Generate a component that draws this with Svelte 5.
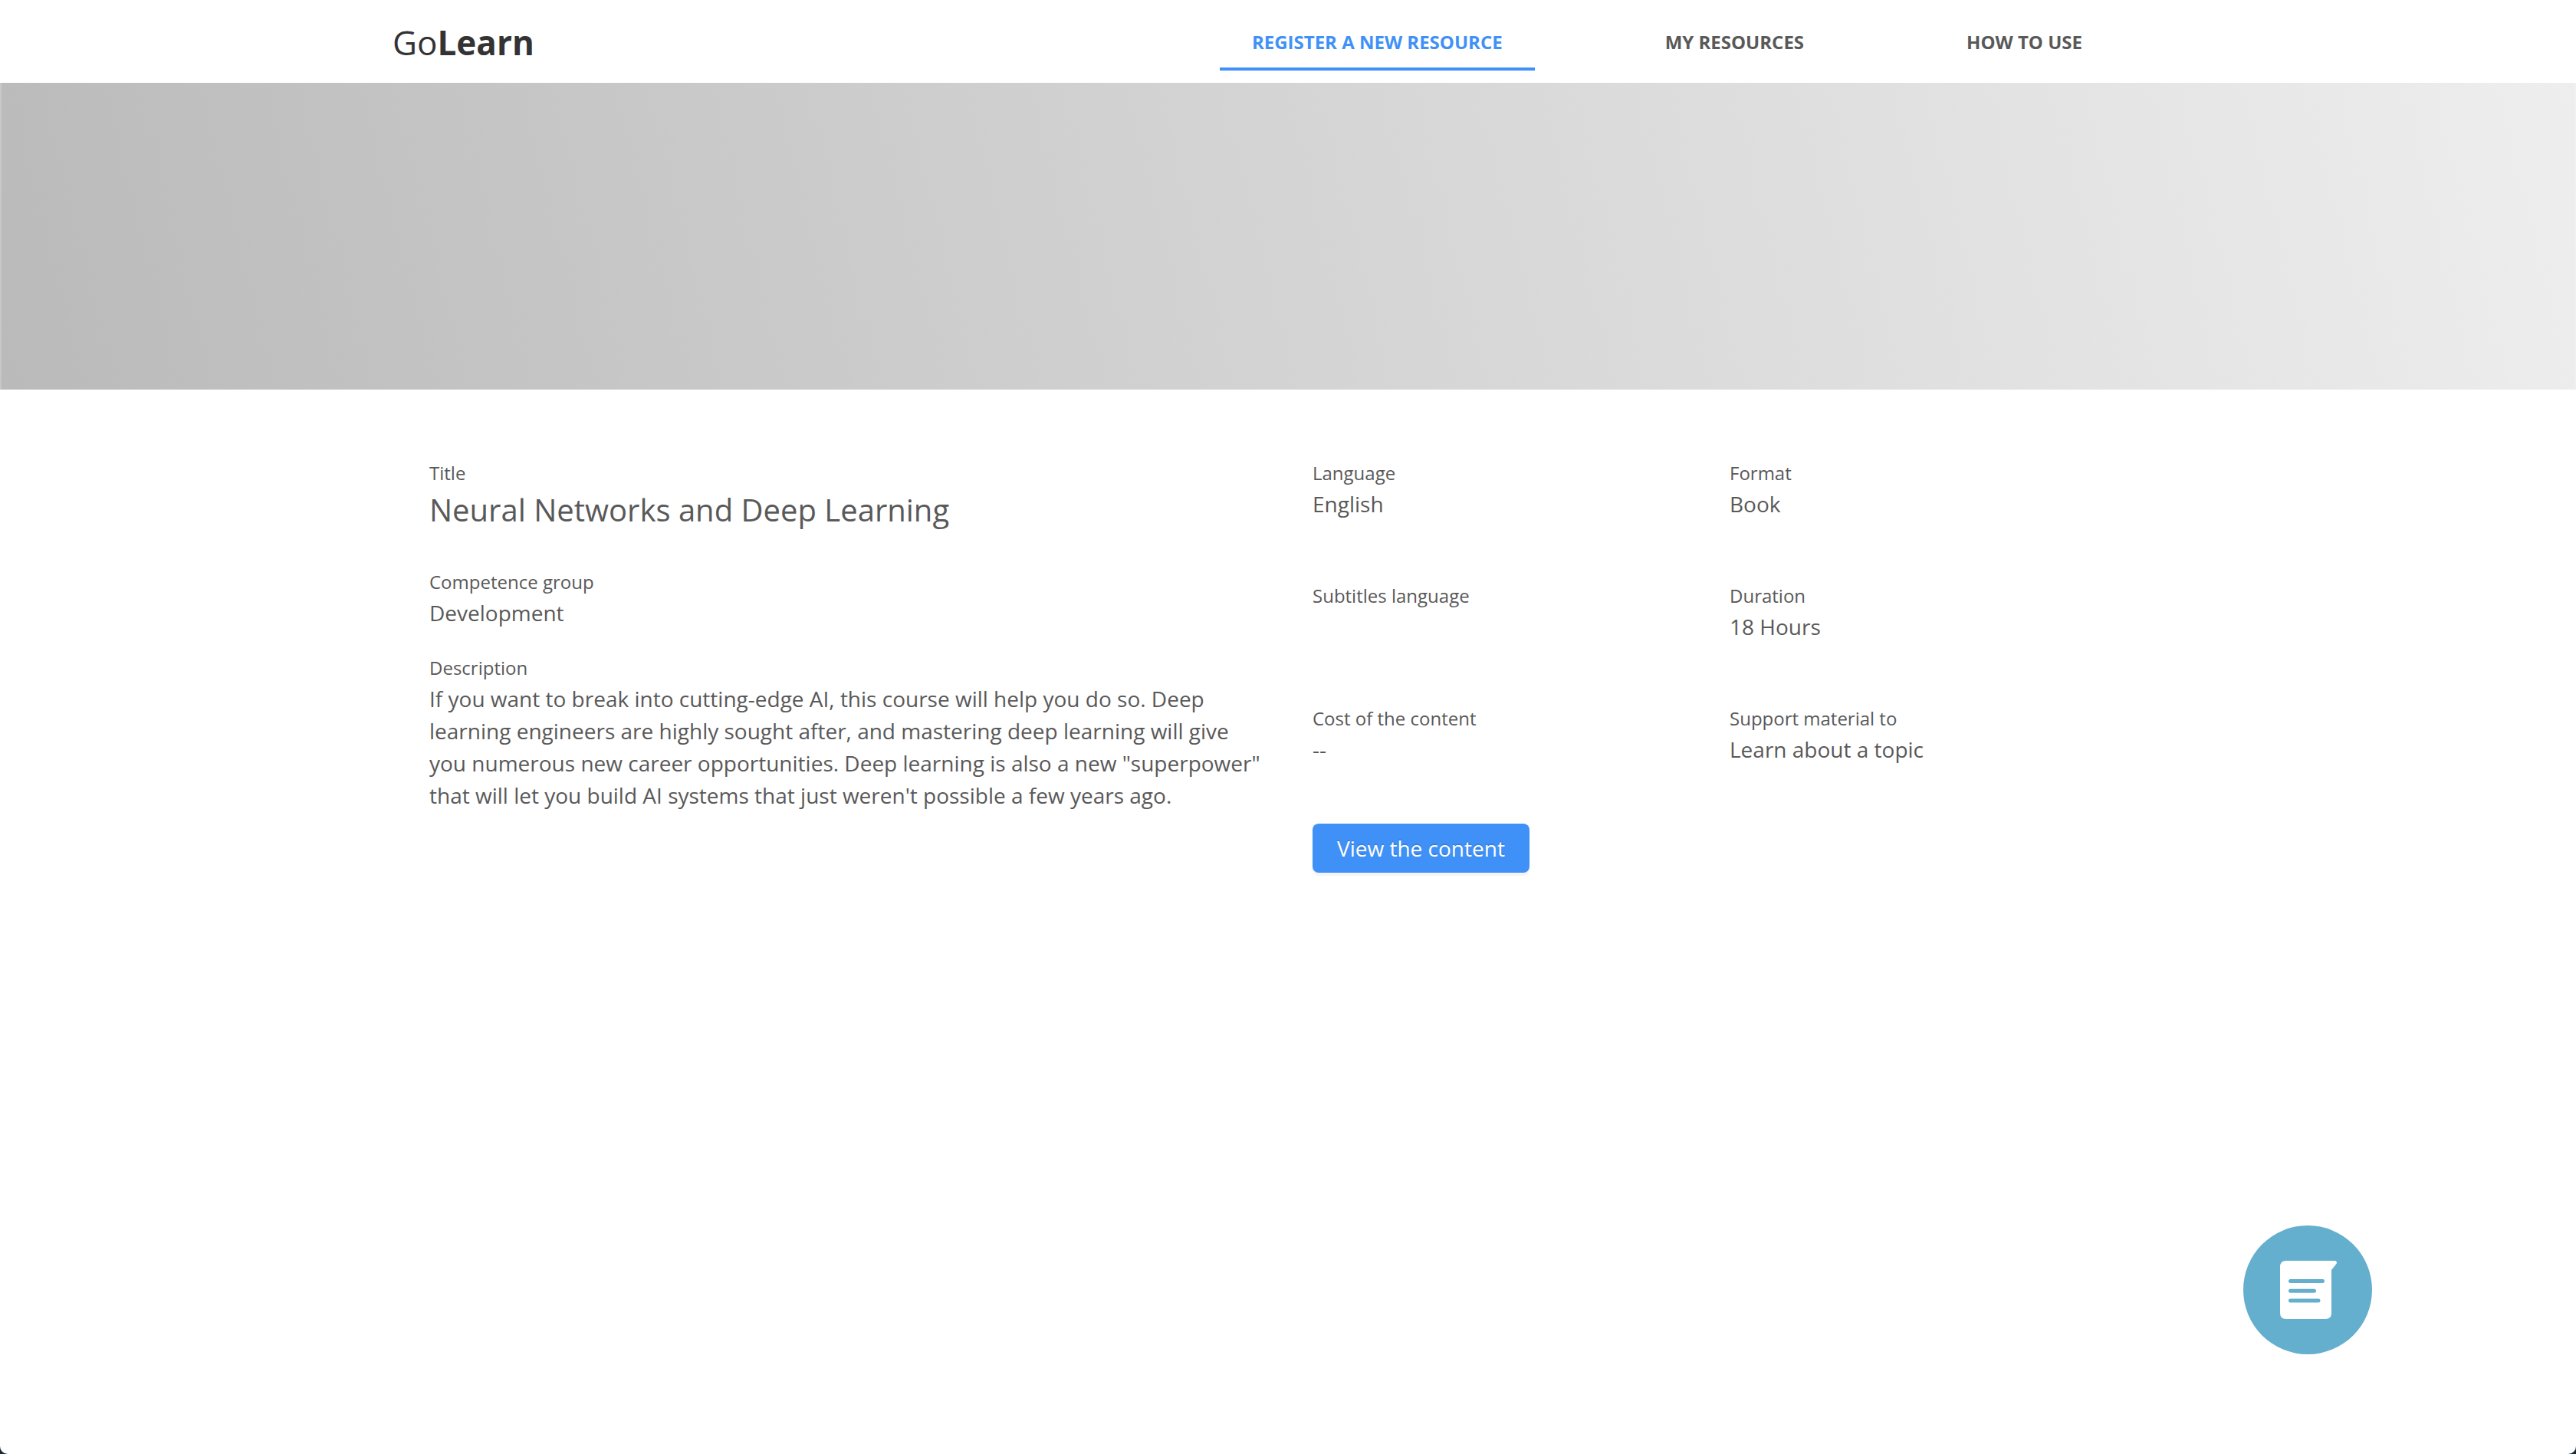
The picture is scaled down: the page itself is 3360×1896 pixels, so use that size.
<script>
  const nav = [
    { label: 'Register a new resource', active: true },
    { label: 'My resources', active: false },
    { label: 'How to use', active: false },
  ];
  const facts = [
    ['Language', 'English'],
    ['Format', 'Book'],
    ['Subtitles language', ''],
    ['Duration', '18 Hours'],
    ['Cost of the content', '--'],
    ['Support material to', 'Learn about a topic'],
  ];
</script>

<div class="page">
  <header>
    <div class="bar">
      <a class="logo" href="#home">Go<b>Learn</b></a>
      <nav>
        {#each nav as item}
          <a href="#nav" class:active={item.active}>{item.label}</a>
        {/each}
      </nav>
    </div>
  </header>
  <div class="banner"></div>
  <main>
    <section class="about">
      <div class="field title">
        <span class="label">Title</span>
        <h1>Neural Networks and Deep Learning</h1>
      </div>
      <div class="field">
        <span class="label">Competence group</span>
        <p>Development</p>
      </div>
      <div class="field">
        <span class="label">Description</span>
        <p>If you want to break into cutting-edge AI, this course will help you do so. Deep learning engineers are highly sought after, and mastering deep learning will give you numerous new career opportunities. Deep learning is also a new "superpower" that will let you build AI systems that just weren't possible a few years ago.</p>
      </div>
    </section>
    <section class="side">
      <div class="facts">
        {#each facts as [label, value]}
          <div class="fact">
            <span class="label">{label}</span>
            <p>{value}</p>
          </div>
        {/each}
      </div>
      <button class="view" type="button">View the content</button>
    </section>
  </main>
  <button class="chat" type="button" aria-label="Open notes">
    <svg viewBox="0 0 168 168" aria-hidden="true">
      <path d="M56 46H120Q123 47 121.500 50L115 58V114Q115 122 107 122H56Q48 122 48 114V54Q48 46 56 46Z" fill="#fff" />
      <path d="M61.500 72.500H103.500M61.500 85.300H92.500M61.500 98H98" stroke="#65afce" stroke-width="5" stroke-linecap="round" />
    </svg>
  </button>
</div>

<style>
  :global(body) {
    background: #1c2733;
  }
  .page {
    min-height: 100vh;
    background: #fff;
    border-radius: 0 0 10px 10px;
    font-family: 'Open Sans', sans-serif;
    font-size: 28px;
    line-height: 42px;
    color: #595959;
  }
  .bar,
  main {
    width: 2336px;
    max-width: 100%;
    margin: 0 auto;
    box-sizing: border-box;
  }
  .bar {
    display: flex;
    justify-content: space-between;
    height: 108px;
    padding-right: 90px;
  }
  .logo {
    font-size: 44px;
    line-height: 110px;
    color: #333;
    text-decoration: none;
  }
  nav {
    display: flex;
    gap: 128px;
    height: 92px;
  }
  nav a {
    padding: 0 42px;
    border-bottom: 4px solid transparent;
    font-size: 24px;
    font-weight: 700;
    line-height: 110px;
    text-transform: uppercase;
    text-decoration: none;
    color: #595959;
    box-sizing: border-box;
  }
  nav a.active {
    color: #4091f7;
    border-color: #4091f7;
  }
  .banner {
    height: 400px;
    border: solid rgba(255, 255, 255, 0.2);
    border-width: 0 2px;
    background: linear-gradient(76deg, #bababa, #eee) border-box;
  }
  main {
    display: grid;
    grid-template-columns: 1088px 1fr;
    gap: 64px;
    padding: 90px 48px;
  }
  .field {
    margin-bottom: 32px;
  }
  .title {
    margin-bottom: 46px;
  }
  .label {
    display: block;
    font-size: 24px;
    line-height: 38px;
  }
  h1,
  p {
    margin: 0;
  }
  h1 {
    font-size: 40px;
    font-weight: 400;
    line-height: 58px;
  }
  .facts {
    display: grid;
    grid-template-columns: 1fr 1fr;
    grid-template-rows: 160px 160px 156px;
  }
  .view {
    height: 64px;
    padding: 0 32px;
    border: 0;
    border-radius: 8px;
    background: #4091f7;
    box-shadow: 0 4px 0 rgba(0, 0, 0, 0.04);
    color: #fff;
    font: inherit;
    text-shadow: 0 -2px 0 rgba(0, 0, 0, 0.12);
  }
  .chat {
    position: fixed;
    right: 266px;
    bottom: 130px;
    width: 168px;
    height: 168px;
    padding: 0;
    border: 0;
    border-radius: 50%;
    background: #65afce;
  }
  .chat svg {
    display: block;
  }
</style>
